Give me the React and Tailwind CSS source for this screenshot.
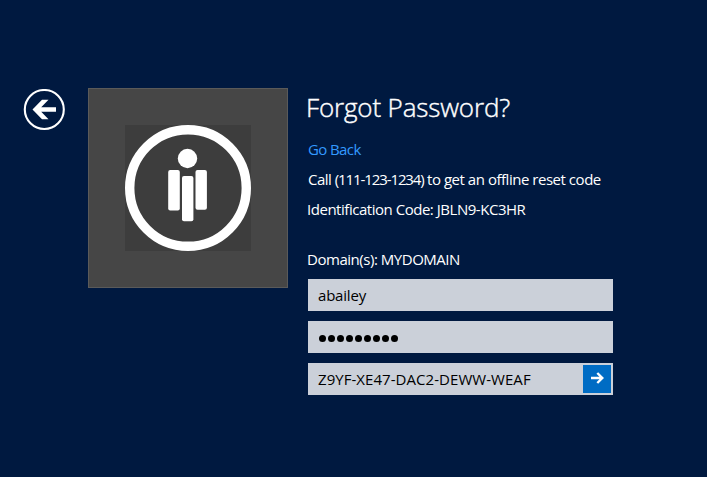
const field = "flex h-8 w-[305px] items-center bg-[#cbd0d9] text-black";

function BackButton() {
  return (
    <button aria-label="Back" className="mt-px h-[42px] w-[42px] shrink-0">
      <svg viewBox="0 0 42 42" width="42" height="42">
        <circle cx="21.3" cy="20.5" r="19.5" fill="none" stroke="#fff" strokeWidth="2.1" />
        <path fill="#fff" d="M9.5 20.5 19 10.8h6.5l-7.3 7.4H33v4.6H18.2l7.3 7.4H19z" />
      </svg>
    </button>
  );
}

function Avatar() {
  return (
    <div className="ml-[23px] flex h-[200px] w-[200px] shrink-0 items-center justify-center border border-[#5a5a5a] bg-[#464646]">
      <svg viewBox="0 0 126 126" width="126" height="126" className="bg-[#3d3d3d]">
        <circle cx="63" cy="63" r="58.3" fill="none" stroke="#fff" strokeWidth="9.4" />
        <g fill="#fff">
          <circle cx="62.5" cy="33.5" r="9.7" />
          <rect x="43.2" y="45" width="11.6" height="40.5" rx="2" />
          <rect x="57" y="51" width="11.4" height="45.3" rx="2" />
          <rect x="70.5" y="45" width="11.4" height="39.8" rx="2" />
        </g>
      </svg>
    </div>
  );
}

export default function App() {
  return (
    <main className="flex h-[477px] w-[707px] items-start overflow-hidden bg-[#001940] pt-[88px] pl-[23px] font-['Open_Sans',sans-serif] text-[15px] leading-[30px] text-white">
      <BackButton />
      <Avatar />
      <section className="ml-5 flex w-[305px] flex-col whitespace-nowrap">
        <h1 className="-ml-0.5 h-[46px] text-[26px] leading-[39px] font-light tracking-[-0.15px] [-webkit-text-stroke:0.4px_white]">Forgot Password?</h1>
        <a href="#" className="text-[#3399ff] tracking-[-0.6px]">Go Back</a>
        <p className="tracking-[-0.47px]">
          <span className="tracking-[-0.5px]">Call </span>
          <span className="tracking-[-1.1px]">(111-123-1234)</span>
          {" to get an offline reset code"}
        </p>
        <p className="-ml-px tracking-[-0.47px]">Identification Code: JBLN9-KC3HR</p>
        <p className="mt-5 -ml-px tracking-[-0.47px]">Domain(s): MYDOMAIN</p>
        <div className="mt-[5px] flex flex-col gap-2.5">
          <div className={field}>
            <span className="pl-2.5 tracking-[-0.2px]">abailey</span>
          </div>
          <div className={field}>
            <div className="flex gap-[2.4px] pt-[3px] pl-[11.3px]">
              {Array.from({ length: 9 }, (_, i) => (
                <i key={i} className="h-[6.6px] w-[6.6px] rounded-full bg-black" />
              ))}
            </div>
          </div>
          <div className={field}>
            <span className="grow pl-2.5 tracking-[0.05px]">Z9YF-XE47-DAC2-DEWW-WEAF</span>
            <button aria-label="Submit" className="mr-0.5 h-7 w-7 bg-[#006cc4]">
              <svg viewBox="0 0 28 28" width="28" height="28" fill="none" stroke="#fff" strokeWidth="2.4">
                <path d="M8 13h11.5M14.3 8l5 5-5 5" />
              </svg>
            </button>
          </div>
        </div>
      </section>
    </main>
  );
}
